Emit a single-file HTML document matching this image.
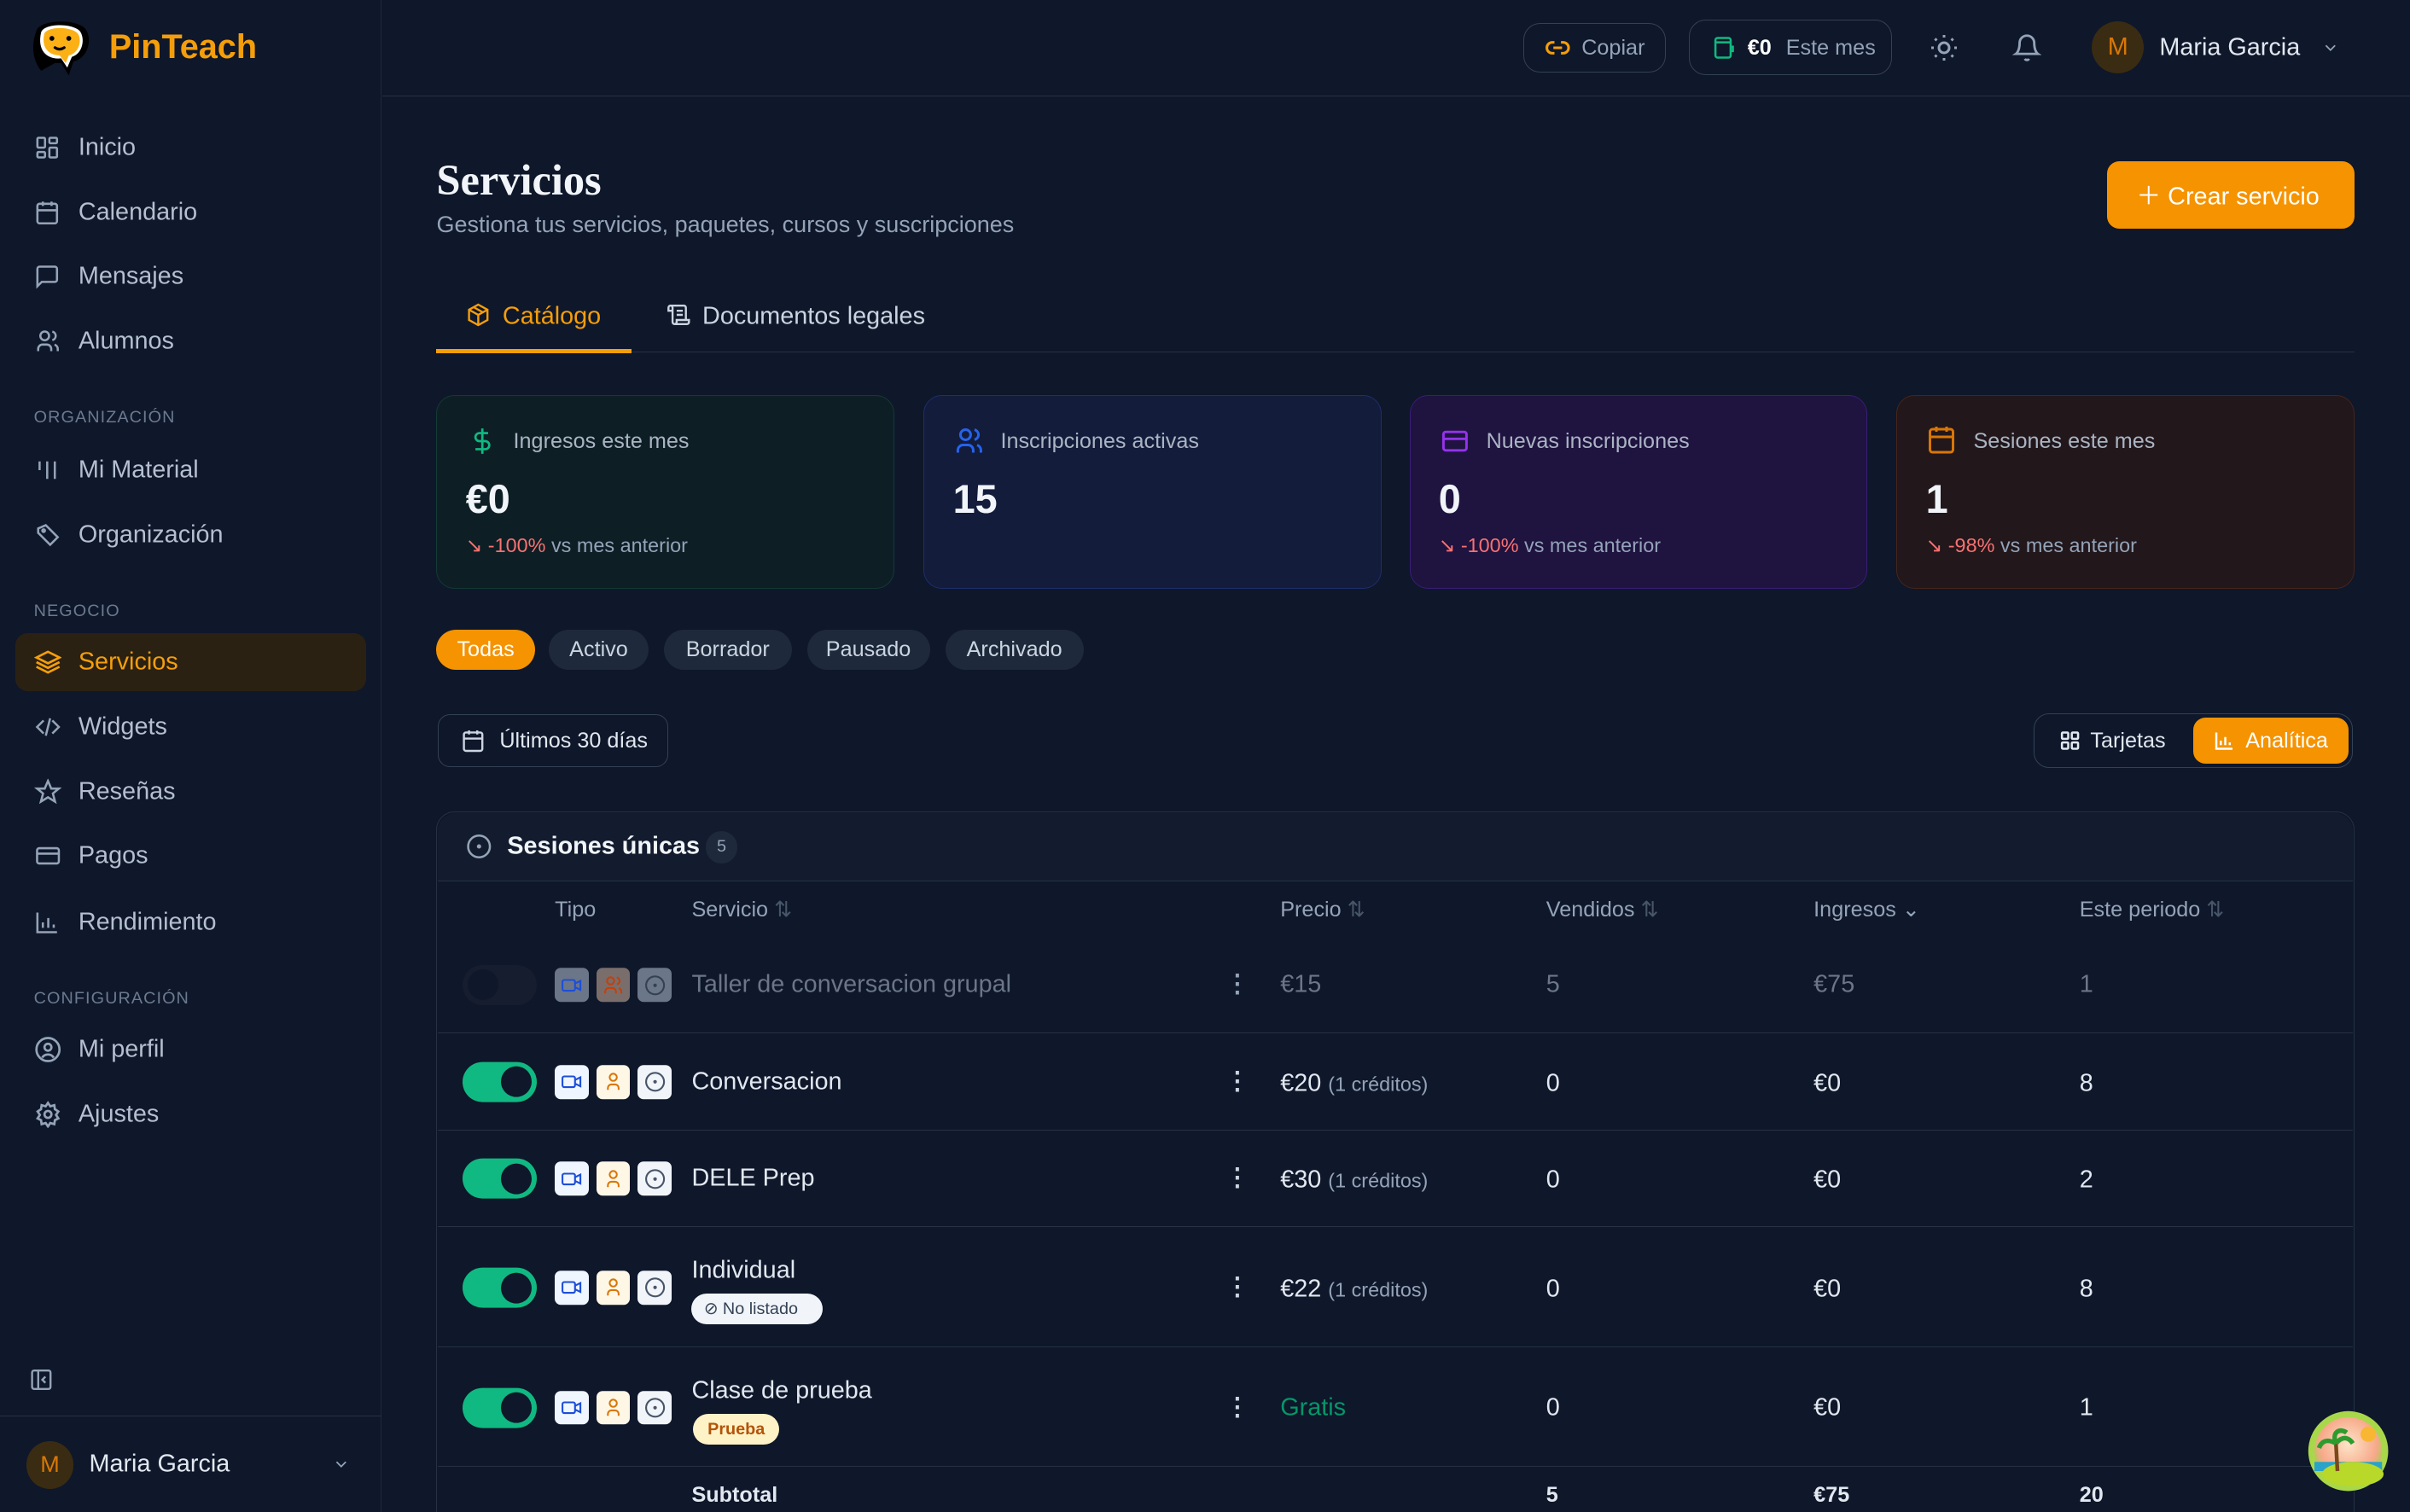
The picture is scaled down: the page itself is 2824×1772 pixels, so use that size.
<!DOCTYPE html>
<html><head><meta charset="utf-8"><style>
*{box-sizing:border-box;margin:0;padding:0}
html,body{width:2824px;height:1772px;overflow:hidden;background:#0f172a}
#r{zoom:1.801;width:1568px;height:984px;position:relative;font-family:"Liberation Sans",sans-serif;color:#e2e8f0;background:#0f172a;overflow:hidden}
.a{position:absolute}
.t{position:absolute;transform:translateY(-50%);white-space:nowrap;line-height:1.2}
svg{display:block}
.ic{position:absolute;transform:translateY(-50%)}
.nav{font-size:16px;color:#b4bfcf}
.sec{font-size:11px;color:#6b7a90;letter-spacing:.6px}
.card{position:absolute;top:257px;width:298px;height:126px;border-radius:12px;border:1px solid}
.pill{position:absolute;top:410px;height:26px;border-radius:13px;background:#1e293b;color:#cbd5e1;font-size:14px;line-height:26px;text-align:center}
.row{position:absolute;left:285px;width:1246px;border-top:1px solid #263244}
.tb{position:absolute;width:22px;height:22px;border-radius:4px;transform:translateY(-50%)}
.tb svg{margin:4px}
.tg{position:absolute;left:301px;width:48px;height:26px;border-radius:13px;background:#10b981;transform:translateY(-50%)}
.tg::after{content:"";position:absolute;right:3px;top:3px;width:20px;height:20px;border-radius:50%;background:#0f172a}
.hd{font-size:14px;color:#94a3b8}
.cell{font-size:16px;color:#e2e8f0}
</style></head><body><div id="r">

<!-- sidebar -->
<div class="a" style="left:0;top:0;width:248px;height:984px;border-right:1px solid #1f2a3c;background:#0f172a"></div>
<svg class="a" style="left:18px;top:10px" width="44" height="44" viewBox="0 0 44 44"><path d="M6 10 C8 3,30 2,37 8 C43 14,40 28,30 30 L27 39 L22 31 L18 31 L9 36 C4 30,2 20,6 10Z" fill="#000"/><path d="M9 11 C11 5,29 5,34 10 C38 15,36 25,29 27 L26 34 L22 28 C14 29,6 24,9 11Z" fill="#fff"/><path d="M11 12 C13 7,29 7,33 12 C36 17,33 25,27 26 L25 31 L21 26 C14 26,9 21,11 12Z" fill="#fbb116"/><circle cx="16" cy="15" r="1.6" fill="#000"/><circle cx="27" cy="15" r="1.6" fill="#000"/><path d="M18 21 Q21 23 24 21" stroke="#000" stroke-width="1.8" fill="none" stroke-linecap="round"/></svg>
<div class="t" style="left:71px;top:31px;font-size:22px;font-weight:bold;color:#f59e0b">PinTeach</div>

<svg class="ic" style="left:22px;top:96px" width="17" height="17" viewBox="0 0 24 24" fill="none" stroke="#94a3b8" stroke-width="2"><rect x="3" y="3" width="7" height="9" rx="1"/><rect x="14" y="3" width="7" height="5" rx="1"/><rect x="14" y="12" width="7" height="9" rx="1"/><rect x="3" y="16" width="7" height="5" rx="1"/></svg>
<div class="t nav" style="left:51px;top:96px">Inicio</div>
<svg class="ic" style="left:22px;top:138px" width="17" height="17" viewBox="0 0 24 24" fill="none" stroke="#94a3b8" stroke-width="2"><rect x="3" y="4" width="18" height="18" rx="2"/><path d="M16 2v4M8 2v4M3 10h18"/></svg>
<div class="t nav" style="left:51px;top:138px">Calendario</div>
<svg class="ic" style="left:22px;top:180px" width="17" height="17" viewBox="0 0 24 24" fill="none" stroke="#94a3b8" stroke-width="2"><path d="M21 15a2 2 0 0 1-2 2H7l-4 4V5a2 2 0 0 1 2-2h14a2 2 0 0 1 2 2z"/></svg>
<div class="t nav" style="left:51px;top:180px">Mensajes</div>
<svg class="ic" style="left:22px;top:222px" width="18" height="17" viewBox="0 0 24 24" fill="none" stroke="#94a3b8" stroke-width="2"><circle cx="9" cy="7" r="4"/><path d="M3 21v-2a4 4 0 0 1 4-4h4a4 4 0 0 1 4 4v2M16 3.1a4 4 0 0 1 0 7.8M21 21v-2a4 4 0 0 0-3-3.9"/></svg>
<div class="t nav" style="left:51px;top:222px">Alumnos</div>

<div class="t sec" style="left:22px;top:272px">ORGANIZACIÓN</div>
<svg class="ic" style="left:22px;top:306px" width="17" height="17" viewBox="0 0 24 24" fill="none" stroke="#94a3b8" stroke-width="2"><path d="M5 4v8M12 4v16M19 4v16"/></svg>
<div class="t nav" style="left:51px;top:306px">Mi Material</div>
<svg class="ic" style="left:22px;top:348px" width="18" height="17" viewBox="0 0 24 24" fill="none" stroke="#94a3b8" stroke-width="2"><path d="M3 6l7-3 11 11-7 7L3 10z"/><circle cx="8" cy="8" r="1.2"/></svg>
<div class="t nav" style="left:51px;top:348px">Organización</div>

<div class="t sec" style="left:22px;top:398px">NEGOCIO</div>
<div class="a" style="left:10px;top:412px;width:228px;height:38px;border-radius:8px;background:#2a2113"></div>
<svg class="ic" style="left:22px;top:431px" width="18" height="18" viewBox="0 0 24 24" fill="none" stroke="#f59e0b" stroke-width="2"><path d="M12 3 2 8l10 5 10-5z M2 12l10 5 10-5 M2 16l10 5 10-5"/></svg>
<div class="t nav" style="left:51px;top:431px;color:#f59e0b">Servicios</div>
<svg class="ic" style="left:22px;top:473px" width="18" height="17" viewBox="0 0 24 24" fill="none" stroke="#94a3b8" stroke-width="2"><path d="M8 6l-6 6 6 6M16 6l6 6-6 6M14 4l-4 16"/></svg>
<div class="t nav" style="left:51px;top:473px">Widgets</div>
<svg class="ic" style="left:22px;top:515px" width="18" height="17" viewBox="0 0 24 24" fill="none" stroke="#94a3b8" stroke-width="2"><path d="M12 2l3 7h7l-5.5 4.5 2 7.5L12 17l-6.5 4 2-7.5L2 9h7z"/></svg>
<div class="t nav" style="left:51px;top:515px">Reseñas</div>
<svg class="ic" style="left:22px;top:557px" width="18" height="17" viewBox="0 0 24 24" fill="none" stroke="#94a3b8" stroke-width="2"><rect x="2" y="5" width="20" height="14" rx="2"/><path d="M2 10h20"/></svg>
<div class="t nav" style="left:51px;top:557px">Pagos</div>
<svg class="ic" style="left:22px;top:600px" width="17" height="17" viewBox="0 0 24 24" fill="none" stroke="#94a3b8" stroke-width="2"><path d="M3 3v18h18M8 17v-5M13 17V8M18 17v-3"/></svg>
<div class="t nav" style="left:51px;top:600px">Rendimiento</div>

<div class="t sec" style="left:22px;top:650px">CONFIGURACIÓN</div>
<svg class="ic" style="left:22px;top:683px" width="18" height="18" viewBox="0 0 24 24" fill="none" stroke="#94a3b8" stroke-width="2"><circle cx="12" cy="12" r="10"/><circle cx="12" cy="10" r="3"/><path d="M7 19a6 6 0 0 1 10 0"/></svg>
<div class="t nav" style="left:51px;top:683px">Mi perfil</div>
<svg class="ic" style="left:22px;top:725px" width="18" height="18" viewBox="0 0 24 24" fill="none" stroke="#94a3b8" stroke-width="2"><circle cx="12" cy="12" r="3"/><path d="M12 2l2 3 3.5-1 .5 3.5 3 2-2 3 2 3-3 1.5-.5 3.5-3.5-1-2 3-2-3-3.5 1-.5-3.5-3-1.5 2-3-2-3 3-2 .5-3.5 3.5 1z"/></svg>
<div class="t nav" style="left:51px;top:725px">Ajustes</div>

<svg class="ic" style="left:19px;top:898px" width="16" height="16" viewBox="0 0 24 24" fill="none" stroke="#94a3b8" stroke-width="2"><rect x="3" y="3" width="18" height="18" rx="2"/><path d="M9 3v18M16 9l-3 3 3 3"/></svg>
<div class="a" style="left:0;top:921px;width:248px;border-top:1px solid #263244"></div>
<div class="a" style="left:17px;top:938px;width:31px;height:31px;border-radius:50%;background:#3a2c12;color:#d97706;font-size:15px;line-height:31px;text-align:center">M</div>
<div class="t" style="left:58px;top:953px;font-size:16px;color:#e2e8f0">Maria Garcia</div>
<svg class="ic" style="left:216px;top:953px" width="12" height="12" viewBox="0 0 24 24" fill="none" stroke="#94a3b8" stroke-width="2"><path d="M6 9l6 6 6-6"/></svg>

<!-- topbar -->
<div class="a" style="left:249px;top:62px;width:1319px;border-top:1px solid #263244"></div>
<div class="a" style="left:991px;top:15px;width:93px;height:32px;border:1px solid #334155;border-radius:11px"></div>
<svg class="ic" style="left:1005px;top:31px" width="17" height="17" viewBox="0 0 24 24" fill="none" stroke="#f59e0b" stroke-width="2.4"><path d="M9 17H7a5 5 0 0 1 0-10h2M15 7h2a5 5 0 0 1 0 10h-2M8 12h8"/></svg>
<div class="t" style="left:1029px;top:31px;font-size:14px;color:#94a3b8">Copiar</div>
<div class="a" style="left:1099px;top:13px;width:132px;height:36px;border:1px solid #334155;border-radius:11px"></div>
<svg class="ic" style="left:1113px;top:31px" width="17" height="18" viewBox="0 0 24 24" fill="none" stroke="#10b981" stroke-width="2"><rect x="4" y="3" width="14" height="18" rx="2"/><path d="M4 7h14M18 11h2v4h-2"/></svg>
<div class="t" style="left:1137px;top:31px;font-size:14px;color:#fff;font-weight:bold">€0</div>
<div class="t" style="left:1162px;top:31px;font-size:14px;color:#94a3b8">Este mes</div>
<svg class="ic" style="left:1255px;top:31px" width="20" height="20" viewBox="0 0 24 24" fill="none" stroke="#94a3b8" stroke-width="2"><circle cx="12" cy="12" r="4"/><path d="M12 2v2M12 20v2M4.9 4.9l1.4 1.4M17.7 17.7l1.4 1.4M2 12h2M20 12h2M4.9 19.1l1.4-1.4M17.7 6.3l1.4-1.4"/></svg>
<svg class="ic" style="left:1309px;top:31px" width="19" height="20" viewBox="0 0 24 24" fill="none" stroke="#94a3b8" stroke-width="2"><path d="M6 8a6 6 0 0 1 12 0c0 7 3 9 3 9H3s3-2 3-9M10.3 21a1.9 1.9 0 0 0 3.4 0"/></svg>
<div class="a" style="left:1361px;top:14px;width:34px;height:34px;border-radius:50%;background:#3a2c12;color:#d97706;font-size:16px;line-height:34px;text-align:center">M</div>
<div class="t" style="left:1405px;top:31px;font-size:16px;color:#e2e8f0">Maria Garcia</div>
<svg class="ic" style="left:1510px;top:31px" width="12" height="12" viewBox="0 0 24 24" fill="none" stroke="#94a3b8" stroke-width="2"><path d="M6 9l6 6 6-6"/></svg>

<!-- header -->
<div class="t" style="left:284px;top:117px;font-family:'Liberation Serif',serif;font-weight:bold;font-size:28px;color:#f1f5f9">Servicios</div>
<div class="t" style="left:284px;top:146px;font-size:15px;color:#94a3b8">Gestiona tus servicios, paquetes, cursos y suscripciones</div>
<div class="a" style="left:1371px;top:105px;width:161px;height:44px;border-radius:8px;background:#f59300"></div>
<div class="t" style="left:1390px;top:128px;font-size:16px;color:#fff">＋ Crear servicio</div>

<!-- tabs -->
<div class="a" style="left:284px;top:229px;width:1248px;border-top:1px solid #263244"></div>
<div class="a" style="left:284px;top:227px;width:127px;height:3px;background:#f59e0b"></div>
<svg class="ic" style="left:303px;top:205px" width="16" height="16" viewBox="0 0 24 24" fill="none" stroke="#f59e0b" stroke-width="2"><path d="M12 2l9 5v10l-9 5-9-5V7zM3 7l9 5 9-5M12 12v10M7.5 4.5l9 5"/></svg>
<div class="t" style="left:327px;top:206px;font-size:16px;color:#f59e0b">Catálogo</div>
<svg class="ic" style="left:433px;top:205px" width="17" height="16" viewBox="0 0 24 24" fill="none" stroke="#cbd5e1" stroke-width="2"><path d="M8 21h12a2 2 0 0 0 2-2v-2H10v2a2 2 0 1 1-4 0V5a2 2 0 1 0-4 0v3h4M19 17V5a2 2 0 0 0-2-2H4M10 8h6M10 12h6"/></svg>
<div class="t" style="left:457px;top:206px;font-size:16px;color:#cbd5e1">Documentos legales</div>

<!-- cards -->
<div class="card" style="left:284px;background:#0d1f25;border-color:#143a34"></div>
<div class="card" style="left:601px;background:#131c3b;border-color:#1f2e6c"></div>
<div class="card" style="left:917px;background:#1f1340;border-color:#3a1d78"></div>
<div class="card" style="left:1234px;background:#22171b;border-color:#47261a"></div>

<svg class="ic" style="left:305px;top:287px" width="18" height="20" viewBox="0 0 24 24" fill="none" stroke="#10b981" stroke-width="2"><path d="M12 1v22M17 5H9.5a3.5 3.5 0 0 0 0 7h5a3.5 3.5 0 0 1 0 7H6"/></svg>
<div class="t" style="left:334px;top:287px;font-size:14px;color:#aab4c3">Ingresos este mes</div>
<div class="t" style="left:303px;top:325px;font-size:26px;font-weight:bold;color:#f1f5f9">€0</div>
<div class="t" style="left:303px;top:355px;font-size:13px;color:#94a3b8"><span style="color:#f87171">↘ -100%</span> vs mes anterior</div>

<svg class="ic" style="left:620px;top:287px" width="21" height="20" viewBox="0 0 24 24" fill="none" stroke="#2563eb" stroke-width="2"><circle cx="9" cy="7" r="4"/><path d="M3 21v-2a4 4 0 0 1 4-4h4a4 4 0 0 1 4 4v2M16 3.1a4 4 0 0 1 0 7.8M21 21v-2a4 4 0 0 0-3-3.9"/></svg>
<div class="t" style="left:651px;top:287px;font-size:14px;color:#aab4c3">Inscripciones activas</div>
<div class="t" style="left:620px;top:325px;font-size:26px;font-weight:bold;color:#f1f5f9">15</div>

<svg class="ic" style="left:936px;top:287px" width="21" height="18" viewBox="0 0 24 24" fill="none" stroke="#9333ea" stroke-width="2.2"><rect x="2" y="4" width="20" height="16" rx="2"/><path d="M2 10h20"/></svg>
<div class="t" style="left:967px;top:287px;font-size:14px;color:#aab4c3">Nuevas inscripciones</div>
<div class="t" style="left:936px;top:325px;font-size:26px;font-weight:bold;color:#f1f5f9">0</div>
<div class="t" style="left:936px;top:355px;font-size:13px;color:#94a3b8"><span style="color:#f87171">↘ -100%</span> vs mes anterior</div>

<svg class="ic" style="left:1253px;top:286px" width="20" height="21" viewBox="0 0 24 24" fill="none" stroke="#d97706" stroke-width="2"><rect x="3" y="4" width="18" height="18" rx="2"/><path d="M16 2v4M8 2v4M3 10h18"/></svg>
<div class="t" style="left:1284px;top:287px;font-size:14px;color:#aab4c3">Sesiones este mes</div>
<div class="t" style="left:1253px;top:325px;font-size:26px;font-weight:bold;color:#f1f5f9">1</div>
<div class="t" style="left:1253px;top:355px;font-size:13px;color:#94a3b8"><span style="color:#f87171">↘ -98%</span> vs mes anterior</div>

<!-- pills -->
<div class="pill" style="left:284px;width:64px;background:#f59300;color:#fff">Todas</div>
<div class="pill" style="left:357px;width:65px">Activo</div>
<div class="pill" style="left:432px;width:83px">Borrador</div>
<div class="pill" style="left:525px;width:80px">Pausado</div>
<div class="pill" style="left:615px;width:90px">Archivado</div>

<div class="a" style="left:285px;top:465px;width:150px;height:34px;border:1px solid #334155;border-radius:8px"></div>
<svg class="ic" style="left:300px;top:482px" width="16" height="16" viewBox="0 0 24 24" fill="none" stroke="#cbd5e1" stroke-width="2"><rect x="3" y="4" width="18" height="18" rx="2"/><path d="M16 2v4M8 2v4M3 10h18"/></svg>
<div class="t" style="left:325px;top:482px;font-size:14px;color:#e2e8f0">Últimos 30 días</div>

<div class="a" style="left:1323px;top:464px;width:208px;height:36px;border:1px solid #334155;border-radius:10px"></div>
<svg class="ic" style="left:1340px;top:482px" width="14" height="14" viewBox="0 0 24 24" fill="none" stroke="#e2e8f0" stroke-width="2.4"><rect x="3" y="3" width="7" height="7" rx="1"/><rect x="14" y="3" width="7" height="7" rx="1"/><rect x="3" y="14" width="7" height="7" rx="1"/><rect x="14" y="14" width="7" height="7" rx="1"/></svg>
<div class="t" style="left:1360px;top:482px;font-size:14px;color:#e2e8f0">Tarjetas</div>
<div class="a" style="left:1427px;top:467px;width:101px;height:30px;border-radius:8px;background:#f59300"></div>
<svg class="ic" style="left:1440px;top:482px" width="15" height="14" viewBox="0 0 24 24" fill="none" stroke="#fff" stroke-width="2.4"><path d="M3 3v18h18M8 17v-5M13 17V8M18 17v-3"/></svg>
<div class="t" style="left:1461px;top:482px;font-size:14px;color:#fff">Analítica</div>

<!-- table -->
<div class="a" style="left:284px;top:528px;width:1248px;height:470px;border:1px solid #263244;border-radius:12px;background:#0f172a"></div>
<div class="a" style="left:285px;top:529px;width:1246px;height:44px;border-radius:12px 12px 0 0;background:#131c2e"></div>
<div class="a" style="left:285px;top:573px;width:1246px;border-top:1px solid #263244"></div>
<svg class="ic" style="left:303px;top:551px" width="17" height="17" viewBox="0 0 24 24" fill="none" stroke="#94a3b8" stroke-width="2"><circle cx="12" cy="12" r="10"/><circle cx="12" cy="12" r="1" fill="#94a3b8"/></svg>
<div class="t" style="left:330px;top:551px;font-size:16px;font-weight:bold;color:#f1f5f9">Sesiones únicas</div>
<div class="a" style="left:459px;top:541px;width:21px;height:21px;border-radius:50%;background:#1e293b;color:#94a3b8;font-size:11px;line-height:21px;text-align:center">5</div>

<div class="t hd" style="left:361px;top:592px">Tipo</div>
<div class="t hd" style="left:450px;top:592px">Servicio <span style="color:#475569">⇅</span></div>
<div class="t hd" style="left:833px;top:592px">Precio <span style="color:#475569">⇅</span></div>
<div class="t hd" style="left:1006px;top:592px">Vendidos <span style="color:#475569">⇅</span></div>
<div class="t hd" style="left:1180px;top:592px">Ingresos ⌄</div>
<div class="t hd" style="left:1353px;top:592px">Este periodo <span style="color:#475569">⇅</span></div>

<!-- row1 dimmed -->
<div class="a" style="left:301px;top:628px;width:48px;height:26px;border-radius:13px;background:#151d2e"></div>
<div class="a" style="left:304px;top:631px;width:20px;height:20px;border-radius:50%;background:#0f172a"></div>
<div class="tb" style="left:361px;top:641px;background:#6b7688"><svg width="14" height="14" viewBox="0 0 24 24" fill="none" stroke="#1d4ed8" stroke-width="2"><rect x="2" y="6" width="14" height="12" rx="2"/><path d="M16 10l6-3v10l-6-3"/></svg></div>
<div class="tb" style="left:388px;top:641px;background:#7a6e6c"><svg width="14" height="14" viewBox="0 0 24 24" fill="none" stroke="#c2410c" stroke-width="2"><circle cx="9" cy="7" r="4"/><path d="M3 21v-2a4 4 0 0 1 4-4h4a4 4 0 0 1 4 4v2M16 3.1a4 4 0 0 1 0 7.8M21 21v-2a4 4 0 0 0-3-3.9"/></svg></div>
<div class="tb" style="left:415px;top:641px;background:#6b7688"><svg width="14" height="14" viewBox="0 0 24 24" fill="none" stroke="#334155" stroke-width="2"><circle cx="12" cy="12" r="10"/><circle cx="12" cy="12" r="1" fill="#334155"/></svg></div>
<div class="t cell" style="left:450px;top:641px;color:#6b7688">Taller de conversacion grupal</div>
<div class="t" style="left:797px;top:641px;font-size:16px;color:#94a3b8;font-weight:bold">⋮</div>
<div class="t cell" style="left:833px;top:641px;color:#6b7688">€15</div>
<div class="t cell" style="left:1006px;top:641px;color:#6b7688">5</div>
<div class="t cell" style="left:1180px;top:641px;color:#6b7688">€75</div>
<div class="t cell" style="left:1353px;top:641px;color:#6b7688">1</div>

<div class="row" style="top:672px"></div>
<div class="row" style="top:735px"></div>
<div class="row" style="top:798px"></div>
<div class="row" style="top:876px"></div>
<div class="row" style="top:954px"></div>

<!-- active rows -->
<div class="tg" style="top:704px"></div>
<div class="tg" style="top:767px"></div>
<div class="tg" style="top:838px"></div>
<div class="tg" style="top:916px"></div>

<div id="icons"></div>
<!-- icon sets -->
<div class="tb" style="left:361px;top:704px;background:#eff6ff"><svg width="14" height="14" viewBox="0 0 24 24" fill="none" stroke="#1d4ed8" stroke-width="2"><rect x="2" y="6" width="14" height="12" rx="2"/><path d="M16 10l6-3v10l-6-3"/></svg></div>
<div class="tb" style="left:388px;top:704px;background:#fff7e6"><svg width="14" height="14" viewBox="0 0 24 24" fill="none" stroke="#d97706" stroke-width="2"><circle cx="12" cy="7" r="4"/><path d="M6 21v-2a4 4 0 0 1 4-4h4a4 4 0 0 1 4 4v2"/></svg></div>
<div class="tb" style="left:415px;top:704px;background:#f1f5f9"><svg width="14" height="14" viewBox="0 0 24 24" fill="none" stroke="#475569" stroke-width="2"><circle cx="12" cy="12" r="10"/><circle cx="12" cy="12" r="1" fill="#475569"/></svg></div>

<div class="tb" style="left:361px;top:767px;background:#eff6ff"><svg width="14" height="14" viewBox="0 0 24 24" fill="none" stroke="#1d4ed8" stroke-width="2"><rect x="2" y="6" width="14" height="12" rx="2"/><path d="M16 10l6-3v10l-6-3"/></svg></div>
<div class="tb" style="left:388px;top:767px;background:#fff7e6"><svg width="14" height="14" viewBox="0 0 24 24" fill="none" stroke="#d97706" stroke-width="2"><circle cx="12" cy="7" r="4"/><path d="M6 21v-2a4 4 0 0 1 4-4h4a4 4 0 0 1 4 4v2"/></svg></div>
<div class="tb" style="left:415px;top:767px;background:#f1f5f9"><svg width="14" height="14" viewBox="0 0 24 24" fill="none" stroke="#475569" stroke-width="2"><circle cx="12" cy="12" r="10"/><circle cx="12" cy="12" r="1" fill="#475569"/></svg></div>

<div class="tb" style="left:361px;top:838px;background:#eff6ff"><svg width="14" height="14" viewBox="0 0 24 24" fill="none" stroke="#1d4ed8" stroke-width="2"><rect x="2" y="6" width="14" height="12" rx="2"/><path d="M16 10l6-3v10l-6-3"/></svg></div>
<div class="tb" style="left:388px;top:838px;background:#fff7e6"><svg width="14" height="14" viewBox="0 0 24 24" fill="none" stroke="#d97706" stroke-width="2"><circle cx="12" cy="7" r="4"/><path d="M6 21v-2a4 4 0 0 1 4-4h4a4 4 0 0 1 4 4v2"/></svg></div>
<div class="tb" style="left:415px;top:838px;background:#f1f5f9"><svg width="14" height="14" viewBox="0 0 24 24" fill="none" stroke="#475569" stroke-width="2"><circle cx="12" cy="12" r="10"/><circle cx="12" cy="12" r="1" fill="#475569"/></svg></div>

<div class="tb" style="left:361px;top:916px;background:#eff6ff"><svg width="14" height="14" viewBox="0 0 24 24" fill="none" stroke="#1d4ed8" stroke-width="2"><rect x="2" y="6" width="14" height="12" rx="2"/><path d="M16 10l6-3v10l-6-3"/></svg></div>
<div class="tb" style="left:388px;top:916px;background:#fff7e6"><svg width="14" height="14" viewBox="0 0 24 24" fill="none" stroke="#d97706" stroke-width="2"><circle cx="12" cy="7" r="4"/><path d="M6 21v-2a4 4 0 0 1 4-4h4a4 4 0 0 1 4 4v2"/></svg></div>
<div class="tb" style="left:415px;top:916px;background:#f1f5f9"><svg width="14" height="14" viewBox="0 0 24 24" fill="none" stroke="#475569" stroke-width="2"><circle cx="12" cy="12" r="10"/><circle cx="12" cy="12" r="1" fill="#475569"/></svg></div>

<div class="t cell" style="left:450px;top:704px">Conversacion</div>
<div class="t cell" style="left:450px;top:767px">DELE Prep</div>
<div class="t cell" style="left:450px;top:827px">Individual</div>
<div class="a" style="left:450px;top:842px;width:85px;height:20px;border-radius:10px;background:#f1f5f9;color:#334155;font-size:11px;line-height:20px;padding-left:8px">⊘ No listado</div>
<div class="t cell" style="left:450px;top:905px">Clase de prueba</div>
<div class="a" style="left:451px;top:920px;width:56px;height:20px;border-radius:10px;background:#fef3c7;color:#b45309;font-size:11px;font-weight:bold;line-height:20px;text-align:center">Prueba</div>

<div class="t" style="left:797px;top:704px;font-size:16px;color:#cbd5e1;font-weight:bold">⋮</div>
<div class="t" style="left:797px;top:767px;font-size:16px;color:#cbd5e1;font-weight:bold">⋮</div>
<div class="t" style="left:797px;top:838px;font-size:16px;color:#cbd5e1;font-weight:bold">⋮</div>
<div class="t" style="left:797px;top:916px;font-size:16px;color:#cbd5e1;font-weight:bold">⋮</div>

<div class="t cell" style="left:833px;top:705px">€20 <span style="font-size:13px;color:#94a3b8">(1 créditos)</span></div>
<div class="t cell" style="left:833px;top:768px">€30 <span style="font-size:13px;color:#94a3b8">(1 créditos)</span></div>
<div class="t cell" style="left:833px;top:839px">€22 <span style="font-size:13px;color:#94a3b8">(1 créditos)</span></div>
<div class="t cell" style="left:833px;top:916px;color:#059669">Gratis</div>

<div class="t cell" style="left:1006px;top:705px">0</div><div class="t cell" style="left:1180px;top:705px">€0</div><div class="t cell" style="left:1353px;top:705px">8</div>
<div class="t cell" style="left:1006px;top:768px">0</div><div class="t cell" style="left:1180px;top:768px">€0</div><div class="t cell" style="left:1353px;top:768px">2</div>
<div class="t cell" style="left:1006px;top:839px">0</div><div class="t cell" style="left:1180px;top:839px">€0</div><div class="t cell" style="left:1353px;top:839px">8</div>
<div class="t cell" style="left:1006px;top:916px">0</div><div class="t cell" style="left:1180px;top:916px">€0</div><div class="t cell" style="left:1353px;top:916px">1</div>

<div class="t" style="left:450px;top:973px;font-size:14px;font-weight:bold;color:#e2e8f0">Subtotal</div>
<div class="t" style="left:1006px;top:973px;font-size:14px;font-weight:bold;color:#e2e8f0">5</div>
<div class="t" style="left:1180px;top:973px;font-size:14px;font-weight:bold;color:#e2e8f0">€75</div>
<div class="t" style="left:1353px;top:973px;font-size:14px;font-weight:bold;color:#e2e8f0">20</div>

<!-- beach bubble -->
<svg class="a" style="left:1501px;top:917px" width="54" height="54" viewBox="0 0 54 54"><defs><radialGradient id="g" cx=".5" cy=".4" r=".6"><stop offset="0" stop-color="#fde4c8"/><stop offset=".7" stop-color="#f7a98a"/><stop offset="1" stop-color="#9ccf4a"/></radialGradient></defs><circle cx="27" cy="27" r="26" fill="#a8d84a"/><circle cx="27" cy="27" r="22" fill="url(#g)"/><path d="M5 34h44v6H5z" fill="#29a3c9"/><ellipse cx="30" cy="42" rx="20" ry="8" fill="#b8d82a"/><path d="M20 40 L19 22" stroke="#7a4a1a" stroke-width="2.5"/><path d="M19 22 C12 18,9 22,8 25 M19 22 C24 16,28 19,30 22 M19 22 C16 14,22 12,26 15" stroke="#2e9b2e" stroke-width="3" fill="none"/><circle cx="40" cy="16" r="5" fill="#f7b733"/></svg>

</div></body></html>
